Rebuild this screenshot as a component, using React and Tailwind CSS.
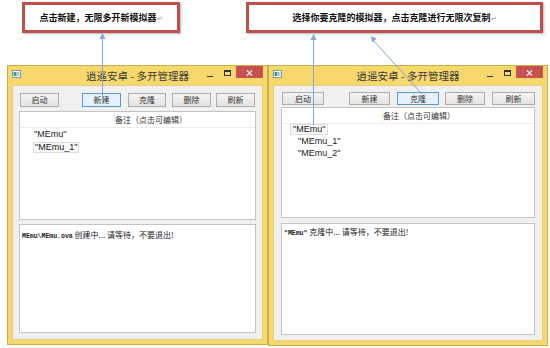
import React from 'react';

const WinIcon = () => (
  <svg width="9" height="8" viewBox="0 0 9 8">
    <rect x="0.5" y="0.5" width="8" height="7" fill="#fff" stroke="#8a97a3" />
    <rect x="1.5" y="2" width="3" height="4" fill="#2f9c8f" />
    <rect x="5" y="2" width="2.5" height="4" fill="#a8cfe8" />
  </svg>
);

const Button = ({ label, cls, active }) => (
  <div
    className={`${cls} h-full flex items-center justify-center text-[8px] text-[#333] border ${
      active ? 'bg-[#e5f1fb] border-[#5b9ad0]' : 'bg-gradient-to-b from-[#f4f4f4] to-[#e3e3e3] border-[#adadad]'
    }`}
  >
    {label}
  </div>
);

const Window = ({ cls, bodyCls, rowCls, listCls, logCls, buttons, headCls, items, log }) => (
  <div className={`${cls} flex flex-col bg-[#f6d86c] border border-[#c9ae4c] px-[4px] pb-[4px]`}>
    {/* Title bar */}
    <div className="h-[19px] grid grid-cols-[1fr_auto_1fr] items-start">
      <div className="pt-[4px]">
        <WinIcon />
      </div>
      <div className="pt-[2px] text-[10.5px] leading-[15px] text-[#3a3a3a]">逍遥安卓 - 多开管理器</div>
      <div className="flex justify-end items-start">
        <div className="w-[6px] h-[1px] bg-[#333] mt-[10px]" />
        <div className="w-[7px] h-[6px] border border-[#333] border-t-2 mt-[4px] ml-[11px]" />
        <div className="w-[27px] h-[12px] bg-[#c75050] ml-[5px] flex items-center justify-center text-white text-[9px] leading-none font-bold">
          ×
        </div>
      </div>
    </div>

    {/* Body */}
    <div className={`${bodyCls} flex-1 flex flex-col bg-[#f0f0f0] border border-[#e3cf86]`}>
      <div className={`${rowCls} flex`}>
        {buttons.map((b) => (
          <Button key={b.label} {...b} />
        ))}
      </div>

      <div className={`${listCls} bg-white border border-[#c4c4c4] flex flex-col`}>
        <div className="h-[16px] flex border-b border-[#ececec] text-[8px] text-[#333]">
          <div className={`${headCls} h-full border-r border-[#eeeeee]`} />
          <div className="flex items-center">备注（点击可编辑）</div>
        </div>
        {items.map((it) => (
          <div key={it.text} className={`${it.row} flex items-center`}>
            <div
              className={`${it.cls} text-[9px] leading-none font-['Liberation_Sans',sans-serif] text-[#222] ${
                it.sel ? 'h-[11px] flex items-center bg-[#f7f7f7] border border-[#dedede]' : ''
              }`}
            >
              {it.text}
            </div>
          </div>
        ))}
      </div>

      <div className={`${logCls} bg-white border border-[#c4c4c4] px-[2px]`}>{log}</div>
    </div>
  </div>
);

export default function App() {
  return (
    <div className="relative w-[550px] h-[348px] bg-white overflow-hidden pt-[2px] font-['Liberation_Sans','Noto_Sans_CJK_SC',sans-serif]">
      {/* Annotations */}
      <div className="flex">
        <div className="ml-[22px] w-[158px] h-[31px] border-[3px] border-[#c0504d] bg-white shadow-[1px_1px_2px_rgba(0,0,0,0.3)] flex items-center justify-center">
          <span className="text-[9px] font-bold text-[#111] font-['Noto_Sans_CJK_SC',sans-serif]">
            点击新建，无限多开新模拟器<span className="text-[7px] font-normal text-[#999]">↵</span>
          </span>
        </div>
        <div className="ml-[66px] w-[297px] h-[31px] border-[3px] border-[#c0504d] bg-white shadow-[1px_1px_2px_rgba(0,0,0,0.3)] flex items-center justify-center">
          <span className="text-[9px] font-bold text-[#111] font-['Noto_Sans_CJK_SC',sans-serif]">
            选择你要克隆的模拟器，点击克隆进行无限次复制<span className="text-[7px] font-normal text-[#999]">↵</span>
          </span>
        </div>
      </div>

      {/* Windows */}
      <div className="mt-[32px] flex pl-[7px] font-['Noto_Sans_CJK_SC',sans-serif]">
        <Window
          cls="w-[261px] h-[280px]"
          bodyCls="px-[6px] pt-[7px] pb-[6px]"
          rowCls="h-[14px]"
          listCls="mt-[4px] h-[109px]"
          logCls="mt-[4px] h-[109px] pt-[4px]"
          headCls="w-[95px]"
          buttons={[
            { label: '启动', cls: 'ml-[1px] w-[39px]' },
            { label: '新建', cls: 'ml-[23px] w-[39px]', active: true },
            { label: '克隆', cls: 'ml-[7px] w-[38px]' },
            { label: '删除', cls: 'ml-[6px] w-[39px]' },
            { label: '刷新', cls: 'ml-[5px] w-[39px]' },
          ]}
          items={[
            { text: '"MEmu"', row: 'h-[13px]', cls: 'ml-[14px]' },
            { text: '"MEmu_1"', row: 'h-[13px]', cls: 'ml-[13px] px-[1px]', sel: true },
          ]}
          log={
            <div className="text-[8px] leading-[12px] text-[#222]">
              <span className="font-['Liberation_Mono',monospace] text-[6.5px] font-bold">MEmu\MEmu.ova</span> 创建中... 请等待，不要退出!
            </div>
          }
        />
        <Window
          cls="w-[280px] h-[281px]"
          bodyCls="px-[7px] pt-[6px] pb-[5px]"
          rowCls="h-[13px]"
          listCls="mt-[2px] h-[111px]"
          logCls="mt-[5px] h-[112px] pt-[2px]"
          headCls="w-[101px]"
          buttons={[
            { label: '启动', cls: 'ml-[1px] w-[42px]' },
            { label: '新建', cls: 'ml-[25px] w-[41px]' },
            { label: '克隆', cls: 'ml-[7px] w-[42px]', active: true },
            { label: '删除', cls: 'ml-[6px] w-[40px]' },
            { label: '刷新', cls: 'ml-[7px] w-[43px]' },
          ]}
          items={[
            { text: '"MEmu"', row: 'h-[11px]', cls: 'ml-[8px] px-[2px]', sel: true },
            { text: '"MEmu_1"', row: 'h-[12px]', cls: 'ml-[16px]' },
            { text: '"MEmu_2"', row: 'h-[12px]', cls: 'ml-[16px]' },
          ]}
          log={
            <div className="text-[8px] leading-[12px] text-[#222]">
              <span className="font-['Liberation_Mono',monospace] text-[6.5px] font-bold">"MEmu"</span> 克隆中... 请等待，不要退出!
            </div>
          }
        />
      </div>

      {/* Callout arrows */}
      <svg className="absolute inset-0 pointer-events-none" width="550" height="348" viewBox="0 0 550 348">
        <g stroke="#7eaadb" strokeWidth="1" fill="none">
          <line x1="102.5" y1="38" x2="102.5" y2="100" />
          <line x1="313.5" y1="39" x2="313.5" y2="125" />
          <line x1="373" y1="40" x2="422" y2="94" />
        </g>
        <g fill="#7eaadb">
          <polygon points="102.5,33 99.5,39 105.5,39" />
          <polygon points="313.5,34 310.5,40 316.5,40" />
          <polygon points="370.5,36 376.7,38.5 372.3,42.5" />
        </g>
      </svg>
    </div>
  );
}
